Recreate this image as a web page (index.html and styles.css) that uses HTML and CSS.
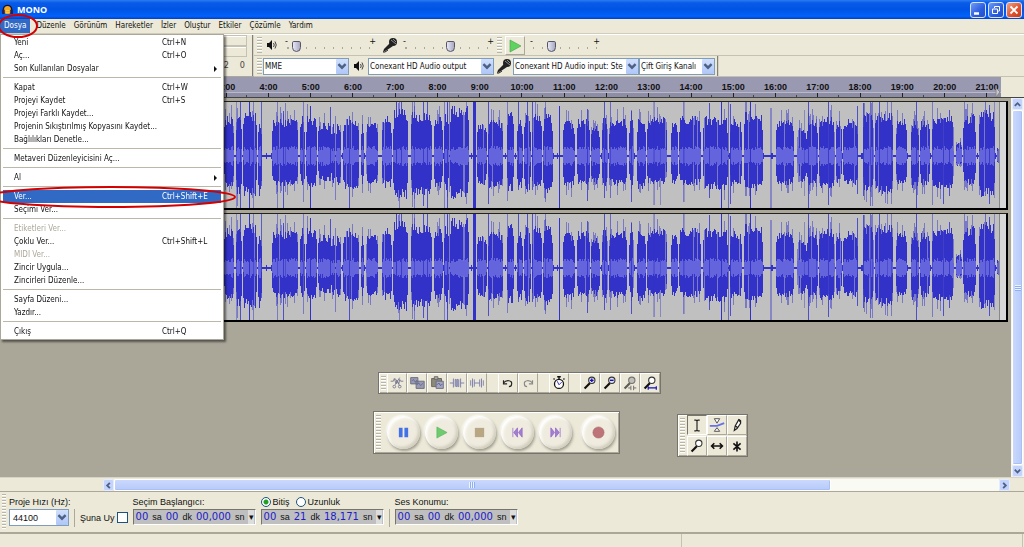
FILE: index.html
```html
<!DOCTYPE html>
<html lang="tr">
<head>
<meta charset="UTF-8">
<meta name="viewport" content="width=device-width, initial-scale=1.0">
<title>MONO</title>
<link rel="stylesheet" href="styles.css">
</head>
<body>
  <svg class="symbols" aria-hidden="true">
    <symbol id="speaker" viewBox="0 0 12 12">
      <path d="M1 4h2l3-3v10l-3-3H1z" fill="#111"/>
      <path d="M7.500 4q1.500 2 0 4M9 2.500q2.500 3.500 0 7" fill="none" stroke="#444"/>
    </symbol>
    <symbol id="mic" viewBox="0 0 16 16">
      <path d="M1 15l1-3 6-6 3 3-6 4z" fill="#222"/>
      <path d="M1 15h2l3-2" fill="none" stroke="#222"/>
      <circle cx="11" cy="5" r="4" fill="#222"/>
      <path d="M9 3l5 4M11 2l3 3" stroke="#aaa" stroke-width=".8"/>
    </symbol>
    <symbol id="down" viewBox="0 0 10 10"><path d="M2 3l3 3 3-3" fill="none" stroke="#4d6185" stroke-width="2"/></symbol>
    <symbol id="lens" viewBox="0 0 20 20">
      <path d="M4 16l6-6" stroke="#111" stroke-width="2.400"/>
      <circle cx="12" cy="7" r="3.500" stroke="#333" stroke-width="1.200"/>
    </symbol>
  </svg>

  <header class="titlebar">
    <svg class="logo" viewBox="0 0 12 12"><circle cx="6" cy="6.500" r="4.500" fill="#f5a623"/><path d="M1.500 8V6a4.500 4.500 0 0 1 9 0v2" fill="none" stroke="#113" stroke-width="1.500"/><rect x="0" y="6" width="3" height="5" rx="1" fill="#225"/><rect x="9" y="6" width="3" height="5" rx="1" fill="#225"/><path d="M4 7h4M4 9h4" stroke="#ffd75a"/></svg>
    <h1>MONO</h1>
    <div class="window-buttons">
      <button aria-label="Simge durumuna küçült"><svg viewBox="0 0 14 14"><path d="M3 10.500h5" stroke="#fff" stroke-width="2.500"/></svg></button>
      <button aria-label="Geri yükle"><svg viewBox="0 0 14 14"><path d="M5.500 5V3.500h5v4.500H9M3.500 6h5v4.500h-5z" fill="none" stroke="#fff"/></svg></button>
      <button class="close" aria-label="Kapat"><svg viewBox="0 0 14 14"><path d="M3.500 3.500l7 7M10.500 3.500l-7 7" stroke="#fff" stroke-width="1.800"/></svg></button>
    </div>
  </header>

  <nav class="menubar">
    <a href="#" class="active">Dosya</a>
    <a href="#">Düzenle</a>
    <a href="#">Görünüm</a>
    <a href="#">Hareketler</a>
    <a href="#">İzler</a>
    <a href="#">Oluştur</a>
    <a href="#">Etkiler</a>
    <a href="#">Çözümle</a>
    <a href="#">Yardım</a>
  </nav>

  <ul class="menu">
    <li><button>Yeni<kbd>Ctrl+N</kbd></button></li>
    <li><button>Aç...<kbd>Ctrl+O</kbd></button></li>
    <li><button class="has-sub">Son Kullanılan Dosyalar</button></li>
    <li class="line"></li>
    <li><button>Kapat<kbd>Ctrl+W</kbd></button></li>
    <li><button>Projeyi Kaydet<kbd>Ctrl+S</kbd></button></li>
    <li><button>Projeyi Farklı Kaydet...</button></li>
    <li><button>Projenin Sıkıştırılmış Kopyasını Kaydet...</button></li>
    <li><button>Bağlılıkları Denetle...</button></li>
    <li class="line"></li>
    <li><button>Metaveri Düzenleyicisini Aç...</button></li>
    <li class="line"></li>
    <li><button class="has-sub">Al</button></li>
    <li class="line"></li>
    <li><button class="selected">Ver...<kbd>Ctrl+Shift+E</kbd></button></li>
    <li><button>Seçimi Ver...</button></li>
    <li class="line"></li>
    <li><button disabled>Etiketleri Ver...</button></li>
    <li><button>Çoklu Ver...<kbd>Ctrl+Shift+L</kbd></button></li>
    <li><button disabled>MIDI Ver...</button></li>
    <li><button>Zincir Uygula...</button></li>
    <li><button>Zincirleri Düzenle...</button></li>
    <li class="line"></li>
    <li><button>Sayfa Düzeni...</button></li>
    <li><button>Yazdır...</button></li>
    <li class="line"></li>
    <li><button>Çıkış<kbd>Ctrl+Q</kbd></button></li>
  </ul>

  <div class="toolbars">
    <div class="meter">
      <div class="meter-bar"></div>
      <div class="meter-bar"></div>
      <div class="meter-scale"><span>2</span><span>0</span></div>
    </div>
    <div class="toolbar-rows">
      <div class="toolbar-row">
        <div class="grip"></div>
        <svg class="icon-speaker"><use href="#speaker"/></svg>
        <div class="slider"><span>-</span><span>+</span><input type="range" aria-label="Çıkış sesi" value="9"></div>
        <svg class="icon-mic"><use href="#mic"/></svg>
        <div class="slider"><span>-</span><span>+</span><input type="range" aria-label="Giriş sesi" value="52"></div>
        <div class="grip second"></div>
        <button class="play-speed" aria-label="Hızda oynat"><svg viewBox="0 0 18 18"><path d="M4 3l11 6-11 6z" fill="#5fd35f" stroke="#4a9a4a" stroke-width=".6"/></svg></button>
        <div class="slider short"><span>-</span><span>+</span><input type="range" aria-label="Oynatma hızı" value="28"></div>
      </div>
      <div class="toolbar-row devices">
        <div class="grip"></div>
        <div class="combo host"><select aria-label="Ses sunucusu"><option>MME</option></select><svg><use href="#down"/></svg></div>
        <svg class="icon-speaker"><use href="#speaker"/></svg>
        <div class="combo device"><select aria-label="Çıkış aygıtı"><option>Conexant HD Audio output</option></select><svg><use href="#down"/></svg></div>
        <svg class="icon-mic"><use href="#mic"/></svg>
        <div class="combo device"><select aria-label="Giriş aygıtı"><option>Conexant HD Audio input: Ste</option></select><svg><use href="#down"/></svg></div>
        <div class="combo channel"><select aria-label="Giriş kanalları"><option>Çift Giriş Kanalı</option></select><svg><use href="#down"/></svg></div>
        <div class="row-end"></div>
      </div>
    </div>
  </div>

  <div class="ruler">
    <ol>
      <li>3:00</li><li>4:00</li><li>5:00</li><li>6:00</li><li>7:00</li><li>8:00</li><li>9:00</li><li>10:00</li><li>11:00</li><li>12:00</li><li>13:00</li><li>14:00</li><li>15:00</li><li>16:00</li><li>17:00</li><li>18:00</li><li>19:00</li><li>20:00</li><li>21:00</li>
    </ol>
    <svg class="ruler-end" viewBox="0 0 23 20"><path d="M-5 11l4 4-4 5z" fill="#c8c8cc" stroke="#888"/></svg>
  </div>

  <main class="workspace">
    <div class="tracks">
      <div class="track"><div class="track-panel"></div><canvas class="wave"></canvas><div class="clip-end"></div></div>
      <div class="track"><div class="track-panel"></div><canvas class="wave"></canvas><div class="clip-end"></div></div>

      <div class="floating edit-bar">
        <div class="grip"></div>
        <button aria-label="Kes"><svg viewBox="0 0 20 20" fill="none" stroke="#777790"><path d="M3 8h3l1-3 2 6 1-4 2 4 1-5 1 2h3M13 4l-5 8M8 5l5 8"/><circle cx="7" cy="14" r="1.500"/><circle cx="13" cy="14" r="1.500"/></svg></button>
        <button aria-label="Kopyala"><svg viewBox="0 0 20 20"><path d="M3 4h8v7H3zM9 8h9v8H9z" fill="#999caf" stroke="#666a80"/><path d="M4 8l2-2 2 3 2-2M10 12l2-2 2 3 3-3" fill="none" stroke="#666a9a"/></svg></button>
        <button aria-label="Yapıştır"><svg viewBox="0 0 20 20"><path d="M4 5h11v9H4z" fill="#8c897a" stroke="#66645a"/><path d="M7 3h4v3H7z" fill="#aaa" stroke="#666"/><path d="M9 8h8v8H9z" fill="#a5a8bd" stroke="#666a80"/><path d="M10 12l2-2 2 3 2-2" fill="none" stroke="#5559aa"/></svg></button>
        <button aria-label="Kırp"><svg viewBox="0 0 20 20" fill="none" stroke="#7779aa"><path d="M2 10h4M14 10h4M6 5v10M14 5v10M8 14V6h1v8h1V6h1v8h1V6"/></svg></button>
        <button aria-label="Sessizleştir"><svg viewBox="0 0 20 20" fill="none" stroke="#7779aa"><path d="M3 7v6M5 5v10M7 6v8M7 10h6M13 6v8M15 5v10M17 7v6"/></svg></button>
        <div class="gap"></div>
        <button aria-label="Geri al"><svg viewBox="0 0 20 20" fill="none" stroke="#222" stroke-width="1.300"><path d="M5 7v4h4M5 10c3-4 10-3 9 1 0 2-1 3-3 3"/></svg></button>
        <button aria-label="Yinele"><svg viewBox="0 0 20 20" fill="none" stroke="#888" stroke-width="1.300"><path d="M15 7v4h-4M15 10c-3-4-10-3-9 1 0 2 1 3 3 3"/></svg></button>
        <div class="gap"></div>
        <button aria-label="Eşzamanla"><svg viewBox="0 0 20 20"><path d="M8 3h4M10 3v3M15 5l1 1M5 5L4 6" stroke="#111" stroke-width="1.500"/><circle cx="10" cy="11" r="5" fill="#fff" stroke="#111" stroke-width="1.400"/><path d="M8 8l2 4 3-3" fill="none" stroke="#22b"/></svg></button>
        <div class="gap"></div>
        <button aria-label="Yakınlaştır"><svg viewBox="0 0 20 20" fill="#dde"><use href="#lens"/><path d="M10 7h4M12 5v4" stroke="#11b" stroke-width="1.500"/></svg></button>
        <button aria-label="Uzaklaştır"><svg viewBox="0 0 20 20" fill="#dde"><use href="#lens"/><path d="M10 7h4" stroke="#11b" stroke-width="1.500"/></svg></button>
        <button aria-label="Seçimi sığdır"><svg viewBox="0 0 20 20" fill="#aaa"><g opacity=".65"><use href="#lens"/></g><path d="M8 15.500h3M14 15.500h3M11 13v5M14 13v5" stroke="#666"/></svg></button>
        <button aria-label="Projeyi sığdır"><svg viewBox="0 0 20 20" fill="#fff"><use href="#lens"/><path d="M8 15.500h9M8 13.500v4M17 13.500v4" stroke="#11b" stroke-width="1.300"/></svg></button>
      </div>

      <div class="floating transport">
        <div class="grip"></div>
        <button aria-label="Duraklat"><svg viewBox="0 0 14 14"><path d="M2 2h4v10H2zM8 2h4v10H8z" fill="#4371e8"/></svg></button>
        <button aria-label="Oynat"><svg viewBox="0 0 14 14"><path d="M2 1l11 6-11 6z" fill="#6ecb6e" stroke="#4fae58" stroke-width=".6"/></svg></button>
        <button aria-label="Durdur"><svg viewBox="0 0 14 14"><path d="M2 2h10v10H2z" fill="#b9a685"/></svg></button>
        <button aria-label="Başa git"><svg viewBox="0 0 14 14"><path d="M2 2v10M7 2v10L3 7zM12 2v10L8 7z" fill="#a57ed0" stroke="#9068c8" stroke-width=".8"/></svg></button>
        <button aria-label="Sona git"><svg viewBox="0 0 14 14"><path d="M12 2v10M7 2v10l4-5zM2 2v10l4-5z" fill="#a57ed0" stroke="#9068c8" stroke-width=".8"/></svg></button>
        <button class="record" aria-label="Kaydet"><svg viewBox="0 0 14 14"><circle cx="7" cy="7" r="6" fill="#bd7478" stroke="#a86468" stroke-width=".6"/></svg></button>
      </div>

      <div class="floating tools">
        <div class="grip"></div>
        <div class="tool-grid">
          <button class="pressed" aria-label="Seçim aracı"><svg viewBox="0 0 20 20"><path d="M7 4.500h2l1 1 1-1h2M10 5v11M7 16.500h2l1-1 1 1h2" fill="none" stroke="#222" stroke-width="1.300"/></svg></button>
          <button aria-label="Zarf aracı"><svg viewBox="0 0 20 20"><path d="M2 11h8l8-3" fill="none" stroke="#6670e8" stroke-width="2"/><path d="M7 3h6l-3 5zM7 17h6l-3-4z" fill="#fff" stroke="#444"/></svg></button>
          <button aria-label="Çizim aracı"><svg viewBox="0 0 20 20"><path d="M7 16l1-5 4-7 2 1v3l-4 6z" fill="#fff" stroke="#222" stroke-width="1.300"/><path d="M12 4l2 3M8 11l3 2" stroke="#222" stroke-width="1.500"/></svg></button>
          <button aria-label="Yakınlaştırma aracı"><svg viewBox="0 0 20 20" fill="#fff"><use href="#lens"/></svg></button>
          <button aria-label="Zaman kaydırma aracı"><svg viewBox="0 0 20 20"><path d="M4 10h12M7 7l-3 3 3 3M13 7l3 3-3 3" fill="none" stroke="#111" stroke-width="1.800"/></svg></button>
          <button aria-label="Çoklu araç"><svg viewBox="0 0 20 20"><path d="M10 5v11M6 7l8 7M14 7l-8 7" stroke="#111" stroke-width="1.800"/></svg></button>
        </div>
      </div>
    </div>
    <div class="vscroll">
      <button aria-label="Yukarı"><svg viewBox="0 0 10 10"><path d="M2 6.500l3-3 3 3" fill="none" stroke="#4d6185" stroke-width="2"/></svg></button>
      <div class="thumb"></div>
      <button aria-label="Aşağı"><svg viewBox="0 0 10 10"><use href="#down"/></svg></button>
    </div>
  </main>

  <div class="hscroll">
    <button aria-label="Sola"><svg viewBox="0 0 10 10"><path d="M6.500 2l-3 3 3 3" fill="none" stroke="#4d6185" stroke-width="2"/></svg></button>
    <div class="hscroll-track"><div class="thumb"></div></div>
    <button aria-label="Sağa"><svg viewBox="0 0 10 10"><path d="M3.500 2l3 3-3 3" fill="none" stroke="#4d6185" stroke-width="2"/></svg></button>
  </div>

  <form class="selection-bar">
    <div class="grip"></div>
    <div class="field rate">
      <label for="rate">Proje Hızı (Hz):</label>
      <div class="combo"><select id="rate"><option>44100</option></select><svg><use href="#down"/></svg></div>
    </div>
    <div class="divider"></div>
    <label class="snap">Şuna Uy<input type="checkbox"></label>
    <div class="field">
      <span>Seçim Başlangıcı:</span>
      <div class="time"><b>00</b><i>sa</i><b>00</b><i>dk</i><b>00,000</b><i>sn</i><button type="button" aria-label="Biçim">▾</button></div>
    </div>
    <div class="field">
      <div class="radios">
        <label><input type="radio" name="end" checked>Bitiş</label>
        <label><input type="radio" name="end">Uzunluk</label>
      </div>
      <div class="time"><b>00</b><i>sa</i><b>21</b><i>dk</i><b>18,171</b><i>sn</i><button type="button" aria-label="Biçim">▾</button></div>
    </div>
    <div class="divider"></div>
    <div class="field">
      <span>Ses Konumu:</span>
      <div class="time"><b>00</b><i>sa</i><b>00</b><i>dk</i><b>00,000</b><i>sn</i><button type="button" aria-label="Biçim">▾</button></div>
    </div>
  </form>

  <footer class="statusbar"><div></div><div></div></footer>

  <svg class="marks" aria-hidden="true">
    <ellipse cx="18" cy="26" rx="19" ry="11"/>
    <ellipse cx="111" cy="197" rx="124" ry="10"/>
  </svg>
  <script src="wave.js"></script>
</body>
</html>
```

FILE: styles.css
```css
* {
  box-sizing: border-box;
}
body {
  margin: 0;
  min-height: 100vh;
  display: flex;
  flex-direction: column;
  background: #ece9d8;
  font-family: "DejaVu Sans Condensed", "Liberation Sans", sans-serif;
  font-size: 8px;
  color: #111;
  overflow: hidden;
}
button, select, input {
  font: inherit;
  color: inherit;
  margin: 0;
  padding: 0;
}
button {
  border: 0;
  background: none;
}
.symbols {
  position: absolute;
  width: 0;
  height: 0;
}

/* title bar */
.titlebar {
  display: flex;
  align-items: center;
  gap: 4px;
  height: 19px;
  padding: 0 2px;
  background: linear-gradient(#2a7cf0, #0a5ae8 15%, #0054e3 50%, #0262fb 85%, #0340c4);
  color: #fff;
}
.titlebar h1 {
  flex: 1;
  margin: 0;
  font-family: "Open Sans", sans-serif;
  font-size: 9px;
  font-weight: bold;
}
.logo {
  width: 11px;
  height: 11px;
}
.window-buttons {
  display: flex;
  gap: 2px;
}
.window-buttons button {
  width: 16px;
  height: 16px;
  border: 1px solid #d5e2fb;
  border-radius: 3px;
  background: linear-gradient(135deg, #6f9bf5, #2a5ce0 60%, #2150cc);
}
.window-buttons svg {
  display: block;
}
.window-buttons .close {
  background: linear-gradient(135deg, #f0a080, #e0502a 60%, #c83c14);
}

/* menus */
.menubar {
  display: flex;
  height: 15px;
  padding-right: 4px;
  border-bottom: 1px solid #d0cdbf;
}
.menubar a {
  padding: 0 4px;
  line-height: 14px;
  color: #111;
  text-decoration: none;
}
.menubar .active {
  margin-right: 2px;
  background: #316ac5;
  color: #fff;
}
.menu {
  position: absolute;
  z-index: 2;
  left: 0;
  top: 34px;
  width: 224px;
  margin: 0;
  padding: 1px 2px;
  list-style: none;
  background: #fff;
  border: 1px solid #aca899;
  box-shadow: 2px 2px 2px rgba(0, 0, 0, .5);
}
.menu button {
  display: flex;
  align-items: center;
  width: 100%;
  height: 13px;
  padding-left: 11px;
  text-align: left;
}
.menu kbd {
  width: 59px;
  margin-left: auto;
  font: inherit;
}
.menu .line {
  height: 6px;
  border-top: 2px solid #fff;
  border-bottom: 3px solid #fff;
  background: #bbb8aa;
}
.menu .has-sub::after {
  content: "";
  margin-left: auto;
  margin-right: 4px;
  border: 3px solid transparent;
  border-left-color: #111;
  border-right: 0;
}
.menu .selected {
  background: #316ac5;
  color: #fff;
}
.menu button:disabled {
  color: #aca899;
}

/* docked toolbars */
.toolbars {
  display: flex;
  height: 43px;
  border-top: 1px solid #fff;
  border-bottom: 1px solid #aca899;
}
.meter {
  width: 254px;
  padding-right: 5px;
  border-right: 2px groove #d5d2c4;
}
.meter-bar {
  height: 11px;
  border: 1px solid #c5c2b2;
  border-left: 0;
  box-shadow: inset 0 1px #fff;
}
.meter-scale {
  display: flex;
  justify-content: flex-end;
  gap: 11px;
  padding: 3px 2px;
  font-size: 9px;
  color: #444;
}
.toolbar-rows {
  flex: 1;
}
.toolbar-row {
  display: flex;
  align-items: center;
  height: 21px;
  padding-left: 2px;
  border-bottom: 1px solid #c5c2b2;
}
.toolbar-row > svg {
  flex: none;
}
.grip {
  width: 5px;
  align-self: stretch;
  margin: 2px 1px;
  background: repeating-linear-gradient(#b9b6a6 0 1px, #fff 1px 2px, #ece9d8 2px 3px);
}
.icon-speaker {
  width: 12px;
  height: 12px;
  margin: 0 6px 0 3px;
}
.icon-mic {
  width: 16px;
  height: 16px;
  margin: 0 4px 0 6px;
}
.slider {
  display: grid;
  grid-template-columns: 1fr auto;
  width: 91px;
  height: 17px;
  font-size: 9px;
  line-height: 8px;
  margin-left: 1px;
}
.slider span {
  grid-row: 1;
}
.slider span:first-child {
  grid-column: 1;
}
.slider span:nth-child(2) {
  grid-column: 2;
}
.slider input {
  grid-row: 1;
  grid-column: 1 / 3;
  width: 100%;
  height: 17px;
  padding-top: 3px;
  appearance: none;
  background: repeating-linear-gradient(90deg, #aaa899 0 1px, transparent 1px 9px) 3px 10px / auto 2px repeat-x;
}
.slider input::-webkit-slider-thumb {
  appearance: none;
  width: 9px;
  height: 11px;
  border: 1px solid #55556a;
  border-radius: 2px 2px 5px 5px;
  background: linear-gradient(90deg, #e8e8f8, #a8a8c0);
}
.slider.short {
  width: 70px;
}
.grip.second {
  margin-left: 3px;
}
.play-speed {
  width: 20px;
  height: 19px;
  margin: 0 4px 0 2px;
  border: 1px solid;
  border-color: #fff #aca899 #aca899 #fff;
}
.play-speed svg {
  display: block;
}
.combo {
  position: relative;
  height: 17px;
}
.combo select {
  display: block;
  width: 100%;
  height: 100%;
  padding: 0 14px 0 1px;
  border: 1px solid #7f9db9;
  border-radius: 0;
  appearance: none;
  background: #fff;
}
.combo svg {
  position: absolute;
  right: 1px;
  top: 1px;
  width: 12px;
  height: 15px;
  border-radius: 1px;
  background: linear-gradient(#d0dffc, #aec6f8);
  pointer-events: none;
}
.devices .icon-speaker {
  margin: 0 3px 0 4px;
}
.devices .icon-mic {
  margin: 0 1px 0 2px;
}
.combo.host {
  width: 86px;
}
.combo.device {
  width: 126px;
}
.combo.channel {
  width: 76px;
}
.row-end {
  width: 4px;
  height: 100%;
  border-right: 2px groove #d5d2c4;
}

/* timeline */
.ruler {
  display: flex;
  height: 21px;
  border-bottom: 1px solid #444;
}
.ruler ol {
  flex: 1;
  display: flex;
  margin: 0;
  padding: 0 0 0 205px;
  list-style: none;
  background: linear-gradient(#9a99b2 0 15px, #b9b9c8 15px 16px, #8e8da6 16px);
  overflow: hidden;
}
.ruler li {
  flex: 1;
  height: 20px;
  text-align: center;
  font: bold 9px/20px "Liberation Sans", sans-serif;
  background:
    linear-gradient(#222, #222) 50% 100% / 1px 4px no-repeat,
    linear-gradient(#444, #444) 100% 18px / 1px 2px no-repeat;
}
.ruler li:last-child {
  margin-right: -7px;
}
.ruler-end {
  width: 23px;
  height: 20px;
  overflow: visible;
}

/* tracks */
.workspace {
  flex: 1;
  display: flex;
  min-height: 379px;
}
.tracks {
  position: relative;
  flex: 1;
  padding-top: 3px;
  background: #aaa799;
}
.track {
  display: flex;
  height: 109px;
  margin: 0 3px 3px 0;
  border: 1px solid #222;
  border-right: 2px solid #000;
  border-bottom: 2px solid #000;
  background: #c0c0c0;
}
.track-panel {
  width: 223px;
}
.wave {
  flex: 1;
  min-width: 0;
  height: 106px;
}
.clip-end {
  width: 7px;
  border-left: 1px solid #888;
  background: #d8d8d8;
}

/* floating toolbars */
.floating {
  position: absolute;
  display: flex;
  background: #ece9d8;
  border: 1px solid #77756b;
  box-shadow: inset 1px 1px #fff, inset -1px -1px #aca899;
}
.edit-bar {
  left: 378px;
  top: 274px;
}
.edit-bar .grip {
  margin: 3px 1px 3px 2px;
}
.edit-bar button, .tools button {
  width: 20px;
  height: 20px;
  border: 1px solid;
  border-color: #fff #aca899 #aca899 #fff;
}
.edit-bar svg, .tools svg {
  display: block;
  width: 18px;
  height: 18px;
}
.edit-bar .gap {
  width: 11px;
}
.transport {
  left: 373px;
  top: 313px;
  align-items: center;
  gap: 5px;
  height: 43px;
  padding-right: 4px;
}
.transport .grip {
  margin: 3px 1px 3px 2px;
}
.transport button {
  display: grid;
  place-items: center;
  width: 33px;
  height: 33px;
  border-radius: 50%;
  background: #efecdf;
  box-shadow: inset 2px 2px 3px #fff, inset -2px -2px 3px #d0cdbd, 1px 2px 3px #9c9a8c, -1px -1px 2px #fff;
}
.transport button svg {
  width: 13px;
  height: 13px;
}
.transport .record {
  margin-left: 5px;
}
.tools {
  left: 677px;
  top: 316px;
}
.tools .grip {
  margin: 3px 2px;
}
.tool-grid {
  display: grid;
  grid-template-columns: repeat(3, 20px);
  gap: 1px 0;
}
.tools .pressed {
  border-color: #77756b #fff #fff #77756b;
}

/* scroll bars */
.vscroll {
  display: flex;
  flex-direction: column;
  width: 13px;
  padding: 0 1px;
  background: #f6f5ee;
}
.vscroll button, .hscroll button {
  width: 11px;
  height: 12px;
  border: 1px solid #e4ecfd;
  border-radius: 2px;
  background: #c3d3fb;
}
.vscroll button svg, .hscroll button svg {
  display: block;
}
.thumb {
  display: flex;
  border: 1px solid #fff;
  background: linear-gradient(90deg, #cad8fc, #b6cbfa);
  border-radius: 2px;
  box-shadow: inset -1px -1px #a8c0f4;
}
.thumb::after {
  content: "";
  margin: auto;
  width: 6px;
  height: 6px;
  background: repeating-linear-gradient(#eef4fe 0 1px, #8cb0f8 1px 2px);
}
.vscroll .thumb {
  flex: 1;
}
.hscroll {
  display: flex;
  height: 14px;
  padding: 1px 14px 0 103px;
  border-top: 1px solid #d8d5c6;
}
.hscroll-track {
  flex: 1;
  display: flex;
  background: #fafaf5;
}
.hscroll .thumb {
  width: 81%;
  background: linear-gradient(#cad8fc, #b6cbfa);
}
.hscroll .thumb::after {
  background: repeating-linear-gradient(90deg, #eef4fe 0 1px, #8cb0f8 1px 2px);
}

/* selection toolbar */
.selection-bar {
  display: flex;
  gap: 5px;
  height: 43px;
  border-top: 1px solid #aca899;
  border-bottom: 2px solid #aca899;
  font-family: "Liberation Sans", Arial, sans-serif;
  font-size: 9px;
  white-space: nowrap;
}
.selection-bar .grip {
  flex: none;
  width: 4px;
  margin: 2px 0 2px 2px;
}
.field {
  display: flex;
  flex-direction: column;
  width: 123px;
  padding-top: 4px;
  line-height: 12px;
}
.field.rate {
  width: 60px;
  margin-left: -2px;
}
.rate .combo {
  margin-top: 1px;
}
.rate select {
  padding-left: 3px;
}
.divider {
  width: 1px;
  margin: 17px 0 5px;
  background: #aca899;
}
.snap {
  display: flex;
  align-items: center;
  gap: 2px;
  padding-top: 11px;
}
.snap input {
  width: 11px;
  height: 11px;
  appearance: none;
  border: 1px solid #1c5180;
  background: #fff;
}
.radios {
  display: flex;
  gap: 6px;
}
.radios label {
  display: flex;
  align-items: center;
  gap: 2px;
}
.radios input {
  width: 10px;
  height: 10px;
  appearance: none;
  border: 1px solid #1c5180;
  border-radius: 50%;
  background: #fff;
}
.radios input:checked {
  background: radial-gradient(#21a121 0 2px, #fff 3px);
}
.time {
  display: flex;
  align-items: center;
  justify-content: space-between;
  height: 16px;
  margin-top: 1px;
  padding-left: 2px;
  border: 1px solid;
  border-color: #77756b #fff #fff #77756b;
  background: #bfbfbf;
}
.time b {
  font: 10px/14px "DejaVu Sans", sans-serif;
  color: #1c1cc8;
}
.time i {
  font-style: normal;
  line-height: 16px;
}
.time button {
  width: 6px;
  height: 14px;
  background: #ddd;
  line-height: 12px;
  text-align: center;
}

.statusbar {
  display: flex;
  height: 14px;
}
.statusbar div {
  flex: 2;
  border-right: 1px solid #c5c2b2;
}
.statusbar div:last-child {
  flex: 1;
  margin-right: 1px;
}

.marks {
  position: absolute;
  z-index: 3;
  left: 0;
  top: 0;
  width: 240px;
  height: 210px;
  fill: none;
  stroke: #d40000;
  stroke-width: 2px;
  pointer-events: none;
}
```

FILE: wave.js
```js
// [start, end, height above, height below] for each stretch of speech
var parts = [
  [224,234,38,30],[236,242,40,36],[243,257,43,38],[258,262,35,40],[272,298,36,28],[300,305,38,30],
  [306,317,38,30],[318,332,32,24],[332,335,32,30],[336,341,32,30],[343,359,36,31],[361,364,34,28],[366,378,32,27],
  [382,392,38,30],[393,408,45,40],[411,432,42,38],[434,443,38,30],[444,449,42,34],[450,469,48,40],
  [477,487,32,28],[488,503,35,30],[507,514,42,33],[517,523,36,30],
  [524,531,40,33],[532,542,40,32],[543,553,41,35],[563,575,34,30],[577,590,36,28],[591,600,30,26],
  [602,608,38,30],[609,627,36,28],[629,634,36,28],[637,646,38,32],[647,667,38,26],[671,678,35,28],
  [679,701,38,28],[703,728,38,32],[730,742,36,28],[744,763,42,34],[776,794,36,27],[797,807,28,24],
  [807,818,35,28],[819,835,38,30],[836,842,36,27],[843,858,35,28],[863,874,42,34],[875,893,42,36],
  [896,907,35,28],[911,919,34,30],[920,930,35,28],[932,954,40,31],[956,962,14,10],[963,976,40,27],
  [979,995,44,38],[997,999,10,9]
];
// [x, above, below, opacity]
var spikes = [
  [236,54,54,.4],[240,54,54,.8],[249,54,54,1],[253,54,54,.5],[261,54,30,.7],[277,54,54,.5],[283,45,52,.8],
  [285,53,36,.5],[303,54,46,.5],[310,50,54,1],[330,49,25,.8],[335,40,44,.5],[349,40,52,.8],[396,54,36,.9],
  [401,54,36,.8],[414,50,54,.5],[423,54,50,.8],[427,54,54,.8],[444,54,54,.5],[447,54,54,.8],[449,54,36,.5],
  [473,54,54,1],[474,54,54,1],[475,54,54,1],[488,54,48,.8],[507,54,45,.5],[518,54,34,.8],[527,54,36,.8],
  [532,54,34,.8],[545,54,46,.5],[559,50,54,1],[587,47,45,.8],[604,54,42,.8],[610,54,42,.6],[631,45,46,.8],
  [653,54,49,.3],[654,54,49,.4],[660,40,49,.4],[683,54,46,.5],[684,54,46,.3],[709,53,42,.8],[721,54,54,1],
  [728,54,54,.6],[730,52,48,.8],[750,54,54,1],[770,48,52,.4],[771,48,52,.4],[804,46,40,.4],[808,54,54,.8],
  [816,40,40,.5],[828,54,49,.8],[857,50,38,.8],[863,53,40,.8],[870,54,50,.6],[872,54,50,.5],[879,54,34,.8],
  [887,54,48,.5],[891,54,48,.5],[916,54,54,.8],[932,54,49,.5],[943,36,48,.8],[949,46,40,.8],[964,54,34,.5],
  [985,54,40,.6],[989,51,48,.8],[994,54,42,.4]
];

function drawWave(canvas) {
  var w = canvas.clientWidth;
  var h = canvas.clientHeight;
  canvas.width = w;
  canvas.height = h;
  var ctx = canvas.getContext("2d");
  var mid = 54;
  var scale = w / 775;
  var seed = 7;

  function rnd() {
    seed = (seed * 16807) % 2147483647;
    return seed / 2147483647;
  }
  function bar(x, up, down, color) {
    ctx.fillStyle = color;
    ctx.fillRect(Math.round((x - 224) * scale), mid - Math.round(up), 1, Math.round(up + down));
  }

  // quiet line between the words
  for (var x = 224; x < 999; x++) {
    var n = rnd() < .2 ? 3 : 1;
    bar(x, n, n, "#3232c8");
  }
  parts.forEach(function (p) {
    for (var x = p[0]; x < p[1]; x++) {
      var edge = Math.min(x - p[0], p[1] - 1 - x) < 1 ? .75 : 1;
      var up = p[2] * edge * (.8 + rnd() * .25);
      var down = p[3] * edge * (.82 + rnd() * .25);
      var r = rnd();
      if (r < .2) {
        bar(x, Math.min(54, up * 1.3), Math.min(52, down * 1.3), "rgba(50,50,200,.5)");
      }
      if (r > .93) {
        bar(x, up, down, "rgba(50,50,200,.5)");
      } else {
        bar(x, up, down, "#3232c8");
      }
      var inner = edge * (6 + rnd() * 4);
      bar(x, inner, inner, "#6464dc");
    }
  });
  spikes.forEach(function (s) {
    bar(s[0], s[1], s[2], "rgba(50,50,200," + s[3] + ")");
  });
}

function drawAll() {
  document.querySelectorAll(".wave").forEach(drawWave);
}
window.addEventListener("resize", drawAll);
drawAll();
```
